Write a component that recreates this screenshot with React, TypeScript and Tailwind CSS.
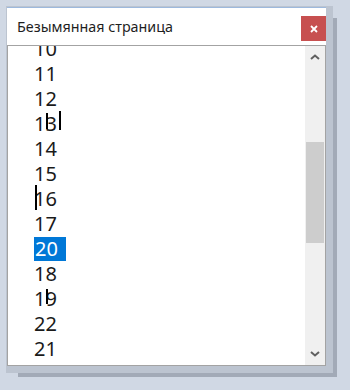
import React from "react";

const items = ["10", "11", "12", "13", "14", "15", "16", "17", "20", "18", "19", "22", "21"];

const Chevron = ({ up }: { up?: boolean }) => (
  <svg width="10" height="6" viewBox="0 0 10 6" className="text-[#606060]">
    <path
      d={up ? "M1 5 L5 1.5 L9 5" : "M1 1 L5 4.5 L9 1"}
      fill="none"
      stroke="currentColor"
      strokeWidth="2"
    />
  </svg>
);

export default function App() {
  return (
    <div className="w-[350px] h-[390px] bg-[#d0d8e4] pt-[7px] pl-[7px] overflow-hidden font-['Noto_Sans',sans-serif]">
      <div className="w-[319px] h-[359px] bg-white flex flex-col shadow-[3px_3px_0_4px_#bcc4d0,11px_11px_0_0_#a2aab7]">
        {/* title bar */}
        <div className="h-[38px] border-t border-[#9db9dd] flex items-start justify-between">
          <span className="pl-[10px] mt-[9px] text-[14.3px] text-[#1e1e1e] leading-[20px]">
            Безымянная страница
          </span>
          <button className="w-[25px] h-[25px] mt-[8px] bg-[#c75050] text-white flex items-center justify-center">
            <svg width="8" height="8" viewBox="0 0 8 8">
              <path d="M1 1 L7 7 M7 1 L1 7" stroke="white" strokeWidth="1.8" />
            </svg>
          </button>
        </div>

        {/* list */}
        <div className="flex-1 flex border border-[#a3a3a3] min-h-0">
          <div className="flex-1 relative overflow-hidden">
            <div className="-mt-[10px]">
              {items.map((n) => (
                <div key={n} className="h-[25px] pl-[26px] text-[20px] leading-[25px] text-[#1a1a1a]">
                  {n === "20" ? (
                    <span className="inline-block bg-[#0078d7] text-white pl-[1px] w-[32px] h-[24px] leading-[24px]">{n}</span>
                  ) : (
                    n
                  )}
                </div>
              ))}
            </div>
            {/* caret artifacts */}
            <div className="absolute left-[38px] top-[67px] w-[2px] h-[16px] bg-black" />
            <div className="absolute left-[51px] top-[65px] w-[2px] h-[19px] bg-black" />
            <div className="absolute left-[27px] top-[139px] w-[2px] h-[25px] bg-black" />
            <div className="absolute left-[38px] top-[243px] w-[2px] h-[15px] bg-black" />
          </div>
          <div className="w-[20px] bg-[#f0f0f0] flex flex-col items-center">
            <div className="h-[22px] flex items-center justify-center">
              <Chevron up />
            </div>
            <div className="flex-1 w-full pt-[74px] pb-[100px] px-[1px]">
              <div className="h-full bg-[#cdcdcd]" />
            </div>
            <div className="h-[22px] flex items-center justify-center">
              <Chevron />
            </div>
          </div>
        </div>
      </div>
    </div>
  );
}
